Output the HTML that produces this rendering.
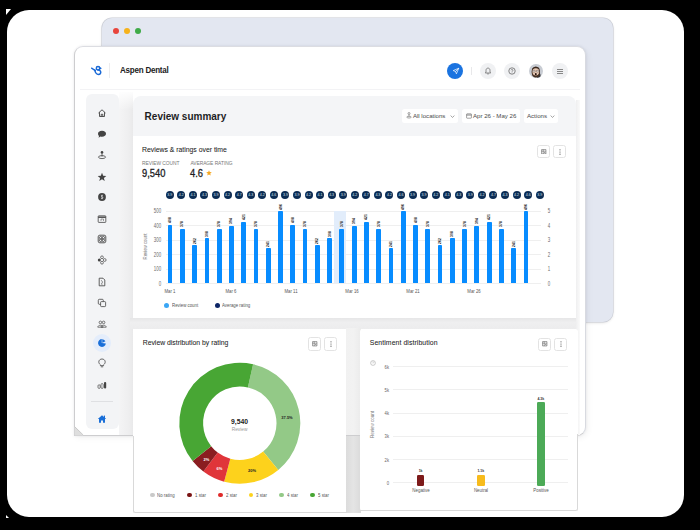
<!DOCTYPE html>
<html><head><meta charset="utf-8">
<style>
*{box-sizing:border-box;margin:0;padding:0}
html,body{width:700px;height:530px;overflow:hidden;background:#000}
body{position:relative;font-family:"Liberation Sans", sans-serif;color:#222}
.a{position:absolute}
.frame{position:absolute;left:7px;top:10px;width:677px;height:507px;background:#fff;border-radius:22px}
.back{position:absolute;left:102.2px;top:18.4px;width:510.8px;height:303.6px;background:#e3e7f1;border-radius:10px;box-shadow:0 0 0 0.6px #c9ccd4, 0 1px 3px rgba(0,0,0,.12)}
.dot{position:absolute;top:27.8px;width:6px;height:6px;border-radius:50%}
.front{position:absolute;left:74.2px;top:45.8px;width:511.6px;height:390px;background:#fff;border-radius:9px 9px 9px 0;border:0.9px solid #cdcdcf;border-top-color:#dcdde2;border-right-color:#d8dae0;box-shadow:0 0 3px rgba(20,30,60,.08), 2px 2px 6px rgba(0,0,0,.05)}
.hb{position:absolute;top:89px;left:80px;width:500px;height:0.8px;background:#f3f3f5}
.hic{position:absolute;top:63px;width:16px;height:16px;border-radius:50%;background:#f0f1f3}
.side{position:absolute;left:86px;top:94px;width:32.7px;height:334.5px;background:#f3f4f6;border-radius:6px}
.si{position:absolute;left:96px;width:12px;height:12px}
.panel{position:absolute;left:132.5px;top:96px;width:443.5px;height:60px;background:#f4f5f7;border-radius:8px}
.btn{position:absolute;top:108.6px;height:14.3px;background:#fff;border-radius:2.5px;font-size:6.1px;color:#4a4a4a;line-height:14.3px;white-space:nowrap}
.card{position:absolute;background:#fff;border-radius:3px}
.ttl{position:absolute;font-size:6.85px;color:#222;white-space:nowrap;line-height:1;-webkit-text-stroke:0.05px #222}
.ib{position:absolute;width:12.9px;height:13.3px;border:0.7px solid #e3e3e3;border-radius:2.5px;background:#fff}
.bar{position:absolute;width:4.8px;background:#078cff;border-radius:0.8px 0.8px 0 0}
.bl{position:absolute;width:8px;height:4px;font-size:4.3px;line-height:4px;color:#1a1a1a;font-weight:700;transform:rotate(-90deg) scaleX(0.8);transform-origin:50% 50%;text-align:center;white-space:nowrap}
.rc{position:absolute;top:191.4px;width:8px;height:8px;border-radius:50%;background:#0b2c54;color:#dfe6ee;font-size:3.6px;line-height:8px;text-align:center}
.gl{position:absolute;left:165.5px;width:375.5px;height:0.5px;background:#efefef}
.yl{position:absolute;left:141px;width:20.2px;text-align:right;font-size:6.3px;line-height:6px;color:#6a6a6a;transform:scaleX(0.7);transform-origin:100% 50%}
.yr{position:absolute;left:546px;width:6px;text-align:center;font-size:6.3px;line-height:6px;color:#6a6a6a;transform:scaleX(0.7)}
.xl{position:absolute;top:288px;width:30px;text-align:center;font-size:5.4px;line-height:6px;color:#555;transform:scaleX(0.8)}
.lg{position:absolute;font-size:5.2px;line-height:6px;color:#555;white-space:nowrap;transform:scaleX(0.84);transform-origin:0 50%}
.ld{position:absolute;width:5px;height:5px;border-radius:50%}
</style></head><body>
<div class="frame"></div>
<svg class="a" style="left:0;top:0" width="700" height="530"><path d="M6 9L11 9L6 15Z" fill="#fff"/><path d="M6 515L9 518L6 518Z" fill="#fff"/></svg>

<div class="back"></div>
<div class="dot" style="left:112.9px;background:#e8453c"></div>
<div class="dot" style="left:123.8px;background:#f6b21b"></div>
<div class="dot" style="left:134.9px;background:#3fab48"></div>

<div class="front"></div>
<!-- header -->
<svg class="a" style="left:88px;top:62px" width="18" height="16" viewBox="0 0 18 16"><path d="M3.6 6.1 L7.3 8.6" stroke="#1b6ad6" stroke-width="1.3" stroke-linecap="round"/><path d="M6.9 8 C7.1 10.3 8.6 12.5 10.5 12.5 C12 12.5 12.9 11.3 12.7 9.9 C12.5 8.6 11.4 7.9 10 8" fill="none" stroke="#1b6ad6" stroke-width="1.55" stroke-linecap="round" stroke-linejoin="round"/><circle cx="10" cy="6.3" r="1.7" fill="none" stroke="#1b6ad6" stroke-width="1.5"/><path d="M11.2 4.6 L13.9 6.3 L11.4 7.9Z" fill="#1b6ad6"/></svg>
<div class="a" style="left:109px;top:62.6px;width:0.8px;height:15px;background:#ececee"></div>
<div class="a" style="left:119.9px;top:64.8px;font-size:8.6px;font-weight:700;color:#222;letter-spacing:-0.25px;white-space:nowrap;line-height:10px;transform:scaleX(0.935);transform-origin:0 50%">Aspen Dental</div>

<div class="a" style="left:447.2px;top:63px;width:16px;height:16px;border-radius:50%;background:#1a73e0"></div>
<svg class="a" style="left:451.5px;top:67.3px" width="8" height="8" viewBox="0 0 8 8"><path d="M6.8 1.2 L1.2 3.6 L3.5 4.5 L4.4 6.8 Z M3.5 4.5 L6.8 1.2" fill="none" stroke="#fff" stroke-width="0.7" stroke-linejoin="round"/></svg>
<div class="a" style="left:471px;top:67px;width:0.8px;height:8px;background:#e8e8ea"></div>
<div class="hic" style="left:479.6px"></div>
<svg class="a" style="left:483.6px;top:66.5px" width="8" height="8" viewBox="0 0 8 8"><path d="M1.3 6 L2 5.1 L2 3.4 C2 2 2.8 1.1 4 1.1 C5.2 1.1 6 2 6 3.4 L6 5.1 L6.7 6 Z M3.2 6.9 L4.8 6.9" fill="none" stroke="#666" stroke-width="0.75" stroke-linejoin="round"/></svg>
<div class="hic" style="left:503.6px"></div>
<svg class="a" style="left:507.6px;top:67px" width="8" height="8" viewBox="0 0 8 8"><circle cx="4" cy="4" r="3.2" fill="none" stroke="#555" stroke-width="0.7"/><path d="M3 3.2 C3 2.3 5 2.3 5 3.2 C5 4 4 4 4 4.8" fill="none" stroke="#555" stroke-width="0.6"/><circle cx="4" cy="5.8" r="0.35" fill="#555"/></svg>
<svg class="a" style="left:527.7px;top:63px" width="16" height="16" viewBox="0 0 16 16"><circle cx="8" cy="8" r="7" fill="#c8ccd3"/><path d="M11 9.5 C12.5 10.5 13 12.5 12.2 14 L9 15 Z" fill="#34353a"/><ellipse cx="7.8" cy="9" rx="4.2" ry="5.6" fill="#3d2a1f"/><ellipse cx="7.8" cy="8.8" rx="3.4" ry="3.9" fill="#e6c8b4"/><path d="M4 6.6 C4 3.4 11.6 3.2 11.6 6.6 C10.8 5.5 9.8 5.2 7.8 5.2 C5.8 5.2 4.8 5.5 4 6.6Z" fill="#3a281e"/><rect x="4.7" y="7.3" width="2.5" height="1.7" rx="0.6" fill="#f4ece6" stroke="#4a3b34" stroke-width="0.45"/><rect x="8.4" y="7.3" width="2.5" height="1.7" rx="0.6" fill="#f4ece6" stroke="#4a3b34" stroke-width="0.45"/><path d="M4.6 10 C4.8 13.6 10.8 13.6 11 10 L11.6 11.6 C11 14.6 4.6 14.6 4 11.6Z" fill="#4a3426"/><ellipse cx="7.8" cy="11.2" rx="0.95" ry="1.1" fill="#2a1610"/></svg>
<div class="hic" style="left:551.6px"></div>
<div class="a" style="left:556.8px;top:69.4px;width:6.5px;height:1.1px;background:#888"></div><div class="a" style="left:556.8px;top:71.3px;width:6.5px;height:1.1px;background:#888"></div>
<div class="a" style="left:556.8px;top:73.2px;width:6.5px;height:1.1px;background:#888"></div>
<div class="hb"></div>

<!-- sidebar -->
<div class="side"></div>
<div class="a" style="left:93px;top:334px;width:18px;height:18px;border-radius:50%;background:#e4edfb"></div>
<svg class="a" style="left:97.0px;top:107.7px" width="10" height="10" viewBox="0 0 10 10"><path d="M1.5 5 L5 1.8 L8.5 5 M2.5 4.2 L2.5 8.5 L7.5 8.5 L7.5 4.2 M4.2 8.5 L4.2 6.3 L5.8 6.3 L5.8 8.5" fill="none" stroke="#444" stroke-width="0.9" stroke-linejoin="round"/></svg>
<svg class="a" style="left:97.0px;top:128.6px" width="10" height="10" viewBox="0 0 10 10"><path d="M5 1.8 C7.6 1.8 9 3.2 9 4.8 C9 6.5 7.4 7.7 5 7.7 C4.4 7.7 3.9 7.6 3.4 7.5 L1.6 8.8 L2 7 C1.3 6.4 1 5.6 1 4.8 C1 3.2 2.4 1.8 5 1.8Z" fill="#444"/></svg>
<svg class="a" style="left:97.0px;top:149.8px" width="10" height="10" viewBox="0 0 10 10"><circle cx="5" cy="2.4" r="1.3" fill="#444"/><path d="M5 3.6 L5 6.6" stroke="#444" stroke-width="0.8"/><ellipse cx="5" cy="7.1" rx="3.5" ry="1.5" fill="none" stroke="#444" stroke-width="0.8"/></svg>
<svg class="a" style="left:97.0px;top:171.9px" width="10" height="10" viewBox="0 0 10 10"><path d="M5 0.8 L6.2 3.8 L9.3 3.9 L6.9 5.9 L7.7 9 L5 7.3 L2.3 9 L3.1 5.9 L0.7 3.9 L3.8 3.8Z" fill="#444"/></svg>
<svg class="a" style="left:97.0px;top:192.3px" width="10" height="10" viewBox="0 0 10 10"><circle cx="5" cy="5" r="3.9" fill="#444"/><path d="M5.9 3.6 C5.6 3.2 4.2 3.1 4.2 4 C4.2 4.8 5.9 4.7 5.9 5.8 C5.9 6.8 4.3 6.6 4 6.2 M5 2.8 L5 7.2" fill="none" stroke="#f3f4f6" stroke-width="0.6"/></svg>
<svg class="a" style="left:97.0px;top:213.5px" width="10" height="10" viewBox="0 0 10 10"><rect x="1.2" y="1.8" width="7.6" height="6.6" rx="0.6" fill="none" stroke="#444" stroke-width="0.8"/><path d="M1.2 3.2 L8.8 3.2" stroke="#444" stroke-width="1.4"/><path d="M4 5 L4 7 M4 5 L6.5 5 L6.5 7" fill="none" stroke="#444" stroke-width="0.5"/></svg>
<svg class="a" style="left:97.0px;top:234.4px" width="10" height="10" viewBox="0 0 10 10"><rect x="1.2" y="1.2" width="7.6" height="7.6" rx="1.6" fill="none" stroke="#444" stroke-width="0.9"/><circle cx="3.7" cy="3.7" r="1.25" fill="none" stroke="#444" stroke-width="0.85"/><circle cx="6.3" cy="3.7" r="1.25" fill="none" stroke="#444" stroke-width="0.85"/><circle cx="3.7" cy="6.3" r="1.25" fill="none" stroke="#444" stroke-width="0.85"/><circle cx="6.3" cy="6.3" r="1.25" fill="none" stroke="#444" stroke-width="0.85"/></svg>
<svg class="a" style="left:97.0px;top:255.4px" width="10" height="10" viewBox="0 0 10 10"><circle cx="5" cy="2.3" r="1.4" fill="none" stroke="#444" stroke-width="0.7"/><circle cx="5" cy="7.7" r="1.4" fill="none" stroke="#444" stroke-width="0.7"/><circle cx="2.3" cy="5" r="1.5" fill="#444"/><circle cx="7.7" cy="5" r="1.4" fill="none" stroke="#444" stroke-width="0.7"/></svg>
<svg class="a" style="left:97.0px;top:276.9px" width="10" height="10" viewBox="0 0 10 10"><path d="M2.2 1.2 L6 1.2 L7.8 3 L7.8 8.8 L2.2 8.8Z" fill="none" stroke="#444" stroke-width="0.85" stroke-linejoin="round"/><path d="M4.2 3.2 L5.6 5 L4.4 7.2 L5.4 7.6" fill="none" stroke="#444" stroke-width="0.6"/></svg>
<svg class="a" style="left:97.0px;top:298.0px" width="10" height="10" viewBox="0 0 10 10"><rect x="1.3" y="1.3" width="5" height="5" rx="1" fill="none" stroke="#444" stroke-width="0.8"/><rect x="3.6" y="3.6" width="5" height="5" rx="0.8" fill="#f3f4f6" stroke="#444" stroke-width="0.8"/></svg>
<svg class="a" style="left:97.0px;top:319.0px" width="10" height="10" viewBox="0 0 10 10"><circle cx="3.4" cy="3.4" r="1.3" fill="none" stroke="#444" stroke-width="0.7"/><circle cx="6.6" cy="3.4" r="1.3" fill="none" stroke="#444" stroke-width="0.7"/><path d="M0.8 8.2 C0.8 5.6 6 5.6 6 8.2Z M4 8.2 C4 5.6 9.2 5.6 9.2 8.2Z" fill="none" stroke="#444" stroke-width="0.7"/></svg>
<svg class="a" style="left:97.0px;top:338.0px" width="10" height="10" viewBox="0 0 10 10"><path d="M5 5 L8.44 3.17 A3.9 3.9 0 1 0 8.86 5.54 Z" fill="#1a6fd8"/><path d="M5 5 L5 1" stroke="#e4edfb" stroke-width="0.5"/></svg>
<svg class="a" style="left:97.0px;top:357.8px" width="10" height="10" viewBox="0 0 10 10"><path d="M3.4 6.8 C2.4 6 1.8 5 1.8 3.9 C1.8 2.2 3.3 1 5 1 C6.7 1 8.2 2.2 8.2 3.9 C8.2 5 7.6 6 6.6 6.8 L6.6 7.6 L3.4 7.6Z M3.8 8.8 L6.2 8.8" fill="none" stroke="#444" stroke-width="0.8" stroke-linejoin="round"/></svg>
<svg class="a" style="left:97.0px;top:379.9px" width="10" height="10" viewBox="0 0 10 10"><rect x="1" y="4.8" width="2.2" height="3.6" rx="1" fill="none" stroke="#444" stroke-width="0.7"/><rect x="4" y="3.6" width="2.2" height="4.8" rx="1" fill="none" stroke="#444" stroke-width="0.7"/><rect x="7" y="2" width="2.2" height="6.4" rx="1" fill="#444"/></svg>
<div class="a" style="left:91px;top:400.5px;width:22px;height:0.7px;background:#dfe0e3"></div>
<svg class="a" style="left:97.0px;top:413.6px" width="10" height="10" viewBox="0 0 10 10"><path d="M5 1.2 L9.2 5 L8 5 L8 8.8 L6 8.8 L6 6.5 L4 6.5 L4 8.8 L2 8.8 L2 5 L0.8 5Z" fill="#1a6fd8"/><rect x="6.8" y="1.6" width="1.2" height="2.5" fill="#1a6fd8"/></svg>

<!-- content shading -->
<div class="a" style="left:118.8px;top:92px;width:14.5px;height:343px;background:linear-gradient(to right,#f4f4f5,#eeeeef 70%,#e9e9ea);"></div>
<div class="a" style="left:118.8px;top:90px;width:14.5px;height:20px;background:linear-gradient(to bottom,#fff,rgba(255,255,255,0));"></div>
<div class="a" style="left:130px;top:317.5px;width:448px;height:11.5px;background:linear-gradient(to bottom,#e6e6e7,#efeff0 40%,#ececed);"></div>
<div class="a" style="left:345.5px;top:328px;width:15px;height:107px;background:linear-gradient(to right,#f1f1f1,#f2f2f2 50%,#ebebeb);"></div>
<div class="a" style="left:576px;top:100px;width:4px;height:335px;background:linear-gradient(to right,#efeff0,#fafafa);"></div>
<div class="a" style="left:345.5px;top:435.5px;width:15px;height:77px;background:linear-gradient(to right,#dcdcdc,#e4e4e4 50%,#dadada);"></div>
<!-- review summary panel -->
<div class="panel"></div>
<div class="a" style="left:144.6px;top:110.5px;font-size:10px;font-weight:700;color:#1d1d1f;white-space:nowrap;line-height:12px">Review summary</div>
<div class="btn" style="left:401.9px;width:56px"><svg class="a" style="left:4px;top:3.6px" width="6" height="7" viewBox="0 0 6 7"><circle cx="3" cy="1.5" r="1" fill="none" stroke="#666" stroke-width="0.6"/><path d="M3 2.5 L3 4.6" stroke="#666" stroke-width="0.6"/><ellipse cx="3" cy="5.1" rx="2.3" ry="0.9" fill="none" stroke="#666" stroke-width="0.6"/></svg><span class="a" style="left:11px">All locations</span><svg class="a" style="left:48.5px;top:6px" width="5" height="3" viewBox="0 0 5 3"><path d="M0.6 0.6 L2.5 2.4 L4.4 0.6" fill="none" stroke="#666" stroke-width="0.6"/></svg></div>
<div class="btn" style="left:462px;width:58px"><svg class="a" style="left:4px;top:4.3px" width="6" height="6" viewBox="0 0 6 6"><rect x="0.6" y="0.8" width="4.8" height="4.4" rx="0.5" fill="none" stroke="#666" stroke-width="0.6"/><path d="M0.6 2 L5.4 2" stroke="#666" stroke-width="0.8"/></svg><span class="a" style="left:11px">Apr 26 - May 26</span></div>
<div class="btn" style="left:524px;width:34px"><span class="a" style="left:3px">Actions</span><svg class="a" style="left:26px;top:6px" width="5" height="3" viewBox="0 0 5 3"><path d="M0.6 0.6 L2.5 2.4 L4.4 0.6" fill="none" stroke="#666" stroke-width="0.6"/></svg></div>

<!-- card 1 -->
<div class="card" style="left:132.8px;top:135.6px;width:443.2px;height:182px;border-radius:0 0 4px 4px"></div>
<div class="ttl" style="left:142px;top:146.8px">Reviews &amp; ratings over time</div>
<div class="ib" style="left:537.2px;top:145.2px"><svg class="a" style="left:3.2px;top:2.8px" width="5.5" height="5.5" viewBox="0 0 10 10"><path d="M1 1 L9 1 L9 9 L1 9Z M1 4 L9 4 M4 1 L4 9" fill="none" stroke="#666" stroke-width="1.1"/><path d="M5.6 5.6 L8 8 M8 5.6 L5.6 8" stroke="#666" stroke-width="1"/></svg></div>
<div class="ib" style="left:553.2px;top:145.2px"><svg class="a" style="left:5.2px;top:2.7px" width="2" height="6" viewBox="0 0 2 6"><circle cx="1" cy="0.8" r="0.6" fill="#555"/><circle cx="1" cy="3" r="0.6" fill="#555"/><circle cx="1" cy="5.2" r="0.6" fill="#555"/></svg></div>
<div class="a" style="left:142px;top:161.3px;font-size:4.9px;color:#777;line-height:5px;white-space:nowrap;letter-spacing:-0.05px">REVIEW COUNT</div>
<div class="a" style="left:190.4px;top:161.3px;font-size:4.9px;color:#777;line-height:5px;white-space:nowrap;letter-spacing:-0.05px">AVERAGE RATING</div>
<div class="a" style="left:142px;top:168.2px;font-size:10.4px;font-weight:400;-webkit-text-stroke:0.3px #1d1d1f;color:#1d1d1f;line-height:11px;white-space:nowrap;transform:scaleX(0.9);transform-origin:0 50%">9,540</div>
<div class="a" style="left:190.3px;top:168.2px;font-size:10.4px;font-weight:400;-webkit-text-stroke:0.3px #1d1d1f;color:#1d1d1f;line-height:11px;white-space:nowrap;transform:scaleX(0.9);transform-origin:0 50%">4.6</div>
<svg class="a" style="left:206.3px;top:170.1px" width="6" height="6" viewBox="0 0 10 10"><path d="M5 0.3 L6.3 3.4 L9.7 3.6 L7.1 5.8 L7.9 9.2 L5 7.4 L2.1 9.2 L2.9 5.8 L0.3 3.6 L3.7 3.4Z" fill="#f6a821"/></svg>
<div class="gl" style="top:210.6px"></div><div class="yl" style="top:208.0px">500</div><div class="yr" style="top:208.0px">5</div><div class="gl" style="top:225.1px"></div><div class="yl" style="top:222.5px">400</div><div class="yr" style="top:222.5px">4</div><div class="gl" style="top:239.6px"></div><div class="yl" style="top:237.0px">300</div><div class="yr" style="top:237.0px">3</div><div class="gl" style="top:254.1px"></div><div class="yl" style="top:251.5px">200</div><div class="yr" style="top:251.5px">2</div><div class="gl" style="top:268.6px"></div><div class="yl" style="top:266.0px">100</div><div class="yr" style="top:266.0px">1</div><div class="gl" style="top:283.1px"></div><div class="yl" style="top:280.5px">0</div><div class="yr" style="top:280.5px">0</div>
<div class="a" style="left:334.2px;top:211px;width:11.6px;height:72.4px;background:#e2edfb"></div>
<div class="bar" style="left:167.70px;top:224.50px;height:58.90px"></div><div class="bl" style="left:166.10px;top:218.00px">408</div><div class="bar" style="left:179.97px;top:228.50px;height:54.90px"></div><div class="bl" style="left:178.37px;top:222.00px">378</div><div class="bar" style="left:192.24px;top:245.00px;height:38.40px"></div><div class="bl" style="left:190.64px;top:238.50px">262</div><div class="bar" style="left:204.51px;top:238.30px;height:45.10px"></div><div class="bl" style="left:202.91px;top:231.80px">308</div><div class="bar" style="left:216.78px;top:228.50px;height:54.90px"></div><div class="bl" style="left:215.18px;top:222.00px">378</div><div class="bar" style="left:229.05px;top:225.80px;height:57.60px"></div><div class="bl" style="left:227.45px;top:219.30px">394</div><div class="bar" style="left:241.32px;top:221.90px;height:61.50px"></div><div class="bl" style="left:239.72px;top:215.40px">421</div><div class="bar" style="left:253.59px;top:228.50px;height:54.90px"></div><div class="bl" style="left:251.99px;top:222.00px">378</div><div class="bar" style="left:265.86px;top:248.00px;height:35.40px"></div><div class="bl" style="left:264.26px;top:241.50px">241</div><div class="bar" style="left:278.13px;top:211.00px;height:72.40px"></div><div class="bl" style="left:276.53px;top:204.50px">496</div><div class="bar" style="left:290.40px;top:224.50px;height:58.90px"></div><div class="bl" style="left:288.80px;top:218.00px">408</div><div class="bar" style="left:302.67px;top:228.50px;height:54.90px"></div><div class="bl" style="left:301.07px;top:222.00px">378</div><div class="bar" style="left:314.94px;top:245.00px;height:38.40px"></div><div class="bl" style="left:313.34px;top:238.50px">262</div><div class="bar" style="left:327.21px;top:238.30px;height:45.10px"></div><div class="bl" style="left:325.61px;top:231.80px">308</div><div class="bar" style="left:339.48px;top:228.50px;height:54.90px"></div><div class="bl" style="left:337.88px;top:222.00px">378</div><div class="bar" style="left:351.75px;top:225.80px;height:57.60px"></div><div class="bl" style="left:350.15px;top:219.30px">394</div><div class="bar" style="left:364.02px;top:221.90px;height:61.50px"></div><div class="bl" style="left:362.42px;top:215.40px">421</div><div class="bar" style="left:376.29px;top:228.50px;height:54.90px"></div><div class="bl" style="left:374.69px;top:222.00px">378</div><div class="bar" style="left:388.56px;top:248.00px;height:35.40px"></div><div class="bl" style="left:386.96px;top:241.50px">241</div><div class="bar" style="left:400.83px;top:211.00px;height:72.40px"></div><div class="bl" style="left:399.23px;top:204.50px">496</div><div class="bar" style="left:413.10px;top:224.50px;height:58.90px"></div><div class="bl" style="left:411.50px;top:218.00px">408</div><div class="bar" style="left:425.37px;top:228.50px;height:54.90px"></div><div class="bl" style="left:423.77px;top:222.00px">378</div><div class="bar" style="left:437.64px;top:245.00px;height:38.40px"></div><div class="bl" style="left:436.04px;top:238.50px">262</div><div class="bar" style="left:449.91px;top:238.30px;height:45.10px"></div><div class="bl" style="left:448.31px;top:231.80px">308</div><div class="bar" style="left:462.18px;top:228.50px;height:54.90px"></div><div class="bl" style="left:460.58px;top:222.00px">378</div><div class="bar" style="left:474.45px;top:225.80px;height:57.60px"></div><div class="bl" style="left:472.85px;top:219.30px">394</div><div class="bar" style="left:486.72px;top:221.90px;height:61.50px"></div><div class="bl" style="left:485.12px;top:215.40px">421</div><div class="bar" style="left:498.99px;top:228.50px;height:54.90px"></div><div class="bl" style="left:497.39px;top:222.00px">378</div><div class="bar" style="left:511.26px;top:248.00px;height:35.40px"></div><div class="bl" style="left:509.66px;top:241.50px">241</div><div class="bar" style="left:523.53px;top:211.00px;height:72.40px"></div><div class="bl" style="left:521.93px;top:204.50px">496</div>
<div class="rc" style="left:165.80px">3.9</div><div class="rc" style="left:177.36px">4.2</div><div class="rc" style="left:188.92px">4.1</div><div class="rc" style="left:200.48px">4.3</div><div class="rc" style="left:212.04px">3.9</div><div class="rc" style="left:223.60px">4.2</div><div class="rc" style="left:235.16px">4.7</div><div class="rc" style="left:246.72px">4.3</div><div class="rc" style="left:258.28px">4.2</div><div class="rc" style="left:269.84px">4.6</div><div class="rc" style="left:281.40px">3.9</div><div class="rc" style="left:292.96px">3.9</div><div class="rc" style="left:304.52px">4.2</div><div class="rc" style="left:316.08px">4.1</div><div class="rc" style="left:327.64px">4.3</div><div class="rc" style="left:339.20px">3.9</div><div class="rc" style="left:350.76px">4.2</div><div class="rc" style="left:362.32px">4.7</div><div class="rc" style="left:373.88px">4.3</div><div class="rc" style="left:385.44px">4.2</div><div class="rc" style="left:397.00px">4.6</div><div class="rc" style="left:408.56px">3.9</div><div class="rc" style="left:420.12px">3.9</div><div class="rc" style="left:431.68px">4.2</div><div class="rc" style="left:443.24px">4.1</div><div class="rc" style="left:454.80px">4.3</div><div class="rc" style="left:466.36px">3.9</div><div class="rc" style="left:477.92px">4.2</div><div class="rc" style="left:489.48px">4.7</div><div class="rc" style="left:501.04px">4.3</div><div class="rc" style="left:512.60px">4.2</div><div class="rc" style="left:524.16px">4.6</div><div class="rc" style="left:535.72px">3.9</div>
<div class="xl" style="left:154.6px">Mar 1</div><div class="xl" style="left:215.5px">Mar 6</div><div class="xl" style="left:276.4px">Mar 11</div><div class="xl" style="left:337.3px">Mar 16</div><div class="xl" style="left:398.2px">Mar 21</div><div class="xl" style="left:459.1px">Mar 26</div>
<div class="a" style="left:124.6px;top:244.3px;width:40px;text-align:center;white-space:nowrap;font-size:5.2px;line-height:5px;color:#777;transform:rotate(-90deg) scaleX(0.83)">Review count</div>
<div class="ld" style="left:163.8px;top:302.5px;background:#3aa6f5"></div>
<div class="lg" style="left:171.5px;top:302px">Review count</div>
<div class="ld" style="left:214.9px;top:302.5px;background:#0d2566"></div>
<div class="lg" style="left:222.3px;top:302px">Average rating</div>

<!-- card 2 -->
<div class="card" style="left:132.7px;top:328.5px;width:213.4px;height:183.5px"></div>
<div class="ttl" style="left:142.7px;top:339.5px">Review distribution by rating</div>
<div class="ib" style="left:308px;top:337.3px"><svg class="a" style="left:3.2px;top:2.8px" width="5.5" height="5.5" viewBox="0 0 10 10"><path d="M1 1 L9 1 L9 9 L1 9Z M1 4 L9 4 M4 1 L4 9" fill="none" stroke="#666" stroke-width="1.1"/><path d="M5.6 5.6 L8 8 M8 5.6 L5.6 8" stroke="#666" stroke-width="1"/></svg></div>
<div class="ib" style="left:324px;top:337.3px"><svg class="a" style="left:5.2px;top:2.7px" width="2" height="6" viewBox="0 0 2 6"><circle cx="1" cy="0.8" r="0.6" fill="#555"/><circle cx="1" cy="3" r="0.6" fill="#555"/><circle cx="1" cy="5.2" r="0.6" fill="#555"/></svg></div>
<svg class="a" style="left:0;top:0" width="700" height="530"><path d="M253.10 364.18A60.5 60.5 0 0 1 278.28 469.88L263.14 451.52A36.7 36.7 0 0 0 247.87 387.40Z" fill="#93c987"/>
<path d="M278.28 469.88A60.5 60.5 0 0 1 224.14 481.64L230.30 458.65A36.7 36.7 0 0 0 263.14 451.52Z" fill="#fdd21c"/>
<path d="M224.14 481.64A60.5 60.5 0 0 1 203.39 471.52L217.71 452.51A36.7 36.7 0 0 0 230.30 458.65Z" fill="#e0353a"/>
<path d="M203.39 471.52A60.5 60.5 0 0 1 192.58 461.03L211.16 446.15A36.7 36.7 0 0 0 217.71 452.51Z" fill="#8a1d20"/>
<path d="M192.58 461.03A60.5 60.5 0 0 1 253.10 364.18L247.87 387.40A36.7 36.7 0 0 0 211.16 446.15Z" fill="#48a634"/></svg>
<div class="a" style="left:219.6px;top:417.5px;width:40px;text-align:center;font-size:6.8px;font-weight:700;color:#222;line-height:8px">9,540</div>
<div class="a" style="left:219.6px;top:427px;width:40px;text-align:center;font-size:4.8px;color:#999;line-height:6px">Review</div>
<div class="a" style="left:199px;top:456.5px;width:15px;text-align:center;font-size:4px;font-weight:700;color:#fff;line-height:5px">2%</div>
<div class="a" style="left:212px;top:465.5px;width:15px;text-align:center;font-size:4px;font-weight:700;color:#fff;line-height:5px">6%</div>
<div class="a" style="left:244px;top:467.8px;width:16px;text-align:center;font-size:4px;font-weight:700;color:#222;line-height:5px">20%</div>
<div class="a" style="left:277px;top:414.5px;width:20px;text-align:center;font-size:4px;font-weight:700;color:#222;line-height:5px">37.5%</div>
<div class="ld" style="left:150.2px;top:492.5px;width:4.8px;height:4.8px;background:#c9c9c9"></div>
<div class="lg" style="left:157.4px;top:492.2px">No rating</div>
<div class="ld" style="left:187.1px;top:492.5px;width:4.8px;height:4.8px;background:#7a1414"></div>
<div class="lg" style="left:194.7px;top:492.2px">1 star</div>
<div class="ld" style="left:218.1px;top:492.5px;width:4.8px;height:4.8px;background:#e02a2a"></div>
<div class="lg" style="left:225.6px;top:492.2px">2 star</div>
<div class="ld" style="left:248.7px;top:492.5px;width:4.8px;height:4.8px;background:#fdd21c"></div>
<div class="lg" style="left:256.3px;top:492.2px">3 star</div>
<div class="ld" style="left:279.3px;top:492.5px;width:4.8px;height:4.8px;background:#93c987"></div>
<div class="lg" style="left:286.9px;top:492.2px">4 star</div>
<div class="ld" style="left:310.3px;top:492.5px;width:4.8px;height:4.8px;background:#48a634"></div>
<div class="lg" style="left:317.9px;top:492.2px">5 star</div>

<div class="a" style="left:132.5px;top:435.6px;width:214px;height:77px;border-left:0.8px solid #d9d9d9;border-bottom:0.8px solid #d9d9d9;border-radius:0 0 0 2.5px"></div>
<svg class="a" style="left:70px;top:420px" width="20" height="20"><path d="M4.6 6.6 L4.6 15.6 L13.4 15.6Z" fill="#dedede"/><path d="M4.6 6.6 L13.2 15" stroke="#c4c4c4" stroke-width="0.9"/></svg>
<!-- card 3 -->
<div class="card" style="left:359.8px;top:328.6px;width:217.9px;height:182px"></div>
<div class="ttl" style="left:369.8px;top:339.6px;letter-spacing:0.09px">Sentiment distribution</div>
<div class="ib" style="left:538px;top:337.5px"><svg class="a" style="left:3.2px;top:2.8px" width="5.5" height="5.5" viewBox="0 0 10 10"><path d="M1 1 L9 1 L9 9 L1 9Z M1 4 L9 4 M4 1 L4 9" fill="none" stroke="#666" stroke-width="1.1"/><path d="M5.6 5.6 L8 8 M8 5.6 L5.6 8" stroke="#666" stroke-width="1"/></svg></div><div class="ib" style="left:554.3px;top:337.5px"><svg class="a" style="left:5.2px;top:2.7px" width="2" height="6" viewBox="0 0 2 6"><circle cx="1" cy="0.8" r="0.6" fill="#555"/><circle cx="1" cy="3" r="0.6" fill="#555"/><circle cx="1" cy="5.2" r="0.6" fill="#555"/></svg></div>
<svg class="a" style="left:369.8px;top:359.5px" width="6" height="6" viewBox="0 0 6 6"><circle cx="3" cy="3" r="2.4" fill="none" stroke="#999" stroke-width="0.5"/><path d="M2.2 2.3 C2.2 1.6 3.8 1.6 3.8 2.3 C3.8 2.9 3 2.9 3 3.5" fill="none" stroke="#999" stroke-width="0.4"/></svg>
<div class="a" style="left:393px;top:366.2px;width:174.5px;height:0.5px;background:#efefef"></div>
<div class="a" style="left:378px;top:363.7px;width:11px;text-align:right;font-size:5.2px;line-height:6px;color:#666;transform:scaleX(0.8);transform-origin:100% 50%">6k</div>
<div class="a" style="left:393px;top:389.3px;width:174.5px;height:0.5px;background:#efefef"></div>
<div class="a" style="left:378px;top:386.8px;width:11px;text-align:right;font-size:5.2px;line-height:6px;color:#666;transform:scaleX(0.8);transform-origin:100% 50%">5k</div>
<div class="a" style="left:393px;top:412.5px;width:174.5px;height:0.5px;background:#efefef"></div>
<div class="a" style="left:378px;top:410.0px;width:11px;text-align:right;font-size:5.2px;line-height:6px;color:#666;transform:scaleX(0.8);transform-origin:100% 50%">4k</div>
<div class="a" style="left:393px;top:435.5px;width:174.5px;height:0.5px;background:#efefef"></div>
<div class="a" style="left:378px;top:433.0px;width:11px;text-align:right;font-size:5.2px;line-height:6px;color:#666;transform:scaleX(0.8);transform-origin:100% 50%">3k</div>
<div class="a" style="left:393px;top:459.2px;width:174.5px;height:0.5px;background:#efefef"></div>
<div class="a" style="left:378px;top:456.7px;width:11px;text-align:right;font-size:5.2px;line-height:6px;color:#666;transform:scaleX(0.8);transform-origin:100% 50%">2k</div>
<div class="a" style="left:393px;top:482.4px;width:174.5px;height:0.5px;background:#efefef"></div>
<div class="a" style="left:378px;top:479.9px;width:11px;text-align:right;font-size:5.2px;line-height:6px;color:#666;transform:scaleX(0.8);transform-origin:100% 50%">0</div>
<div class="a" style="left:357px;top:421.5px;width:30px;text-align:center;font-size:4.5px;line-height:5px;color:#777;transform:rotate(-90deg)">Review count</div>
<div class="a" style="left:416.7px;top:474.6px;width:7.8px;height:11.2px;background:#7d1a1a;border-radius:1.3px"></div>
<div class="a" style="left:410.6px;top:469.1px;width:20px;text-align:center;font-size:3.5px;font-weight:700;line-height:4px;color:#333">1k</div>
<div class="a" style="left:405.6px;top:487.4px;width:30px;text-align:center;font-size:5.2px;line-height:6px;color:#555;transform:scaleX(0.85)">Negative</div>
<div class="a" style="left:476.9px;top:474.6px;width:7.8px;height:11.2px;background:#f7bb1c;border-radius:1.3px"></div>
<div class="a" style="left:470.8px;top:469.1px;width:20px;text-align:center;font-size:3.5px;font-weight:700;line-height:4px;color:#333">1.1k</div>
<div class="a" style="left:465.8px;top:487.4px;width:30px;text-align:center;font-size:5.2px;line-height:6px;color:#555;transform:scaleX(0.85)">Neutral</div>
<div class="a" style="left:536.9px;top:402.2px;width:7.8px;height:83.6px;background:#4caa57;border-radius:1.3px"></div>
<div class="a" style="left:530.8px;top:396.7px;width:20px;text-align:center;font-size:3.5px;font-weight:700;line-height:4px;color:#333">4.3k</div>
<div class="a" style="left:525.8px;top:487.4px;width:30px;text-align:center;font-size:5.2px;line-height:6px;color:#555;transform:scaleX(0.85)">Positive</div>
<div class="a" style="left:359.5px;top:434.2px;width:218.5px;height:76.5px;border-right:0.8px solid #d9d9d9;border-bottom:0.8px solid #d9d9d9;border-radius:0 0 2.5px 0"></div>
</body></html>
